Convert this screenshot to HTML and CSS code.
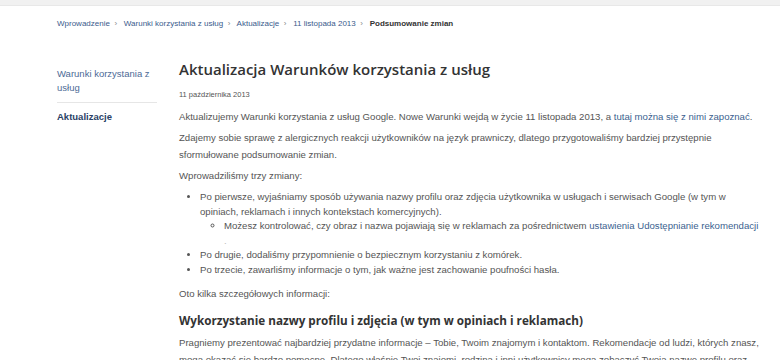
FILE: index.html
```html
<!DOCTYPE html>
<html lang="pl">
<head>
    <meta charset="UTF-8">
    <title>Podsumowanie zmian</title>
    <link rel="stylesheet" href="styles.css">
</head>
<body>
    <div class="topbar"></div>
    <div class="breadcrumbs">
        <a href="#">Wprowadzenie</a><span class="sep">›</span>
        <a href="#">Warunki korzystania z usług</a><span class="sep">›</span>
        <a href="#">Aktualizacje</a><span class="sep">›</span>
        <a href="#">11 listopada 2013</a><span class="sep">›</span>
        <b>Podsumowanie zmian</b>
    </div>
    <div class="page">
        <div class="sidebar">
            <a href="#" class="side-link">Warunki korzystania z usług</a>
            <a href="#" class="side-link current">Aktualizacje</a>
        </div>
        <div class="content">
            <h1>Aktualizacja Warunków korzystania z usług</h1>
            <div class="date">11 października 2013</div>
            <p>Aktualizujemy Warunki korzystania z usług Google. Nowe Warunki wejdą w życie 11 listopada 2013, a <a href="#">tutaj można się z nimi zapoznać</a>.</p>
            <p>Zdajemy sobie sprawę z alergicznych reakcji użytkowników na język prawniczy, dlatego przygotowaliśmy bardziej przystępnie sformułowane podsumowanie zmian.</p>
            <p>Wprowadziliśmy trzy zmiany:</p>
            <ul>
                <li>Po pierwsze, wyjaśniamy sposób używania nazwy profilu oraz zdjęcia użytkownika w usługach i serwisach Google (w tym w opiniach, reklamach i innych kontekstach komercyjnych).
                    <ul>
                        <li>Możesz kontrolować, czy obraz i nazwa pojawiają się w reklamach za pośrednictwem <a href="#">ustawienia Udostępnianie rekomendacji</a><br><span class="stray">.</span></li>
                    </ul>
                </li>
                <li>Po drugie, dodaliśmy przypomnienie o bezpiecznym korzystaniu z komórek.</li>
                <li>Po trzecie, zawarliśmy informacje o tym, jak ważne jest zachowanie poufności hasła.</li>
            </ul>
            <p>Oto kilka szczegółowych informacji:</p>
            <h2>Wykorzystanie nazwy profilu i zdjęcia (w tym w opiniach i reklamach)</h2>
            <p>Pragniemy prezentować najbardziej przydatne informacje – Tobie, Twoim znajomym i kontaktom. Rekomendacje od ludzi, których znasz, mogą okazać się bardzo pomocne. Dlatego właśnie Twoi znajomi, rodzina i inni użytkownicy mogą zobaczyć Twoją nazwę profilu oraz zdjęcie.</p>
        </div>
    </div>
</body>
</html>
```

FILE: styles.css
```css
body {
    margin: 0;
    font-family: "Liberation Sans", Arial, sans-serif;
    color: #555;
    background: #fff;
}
a {
    color: #3b5f8f;
    text-decoration: none;
}
.topbar {
    height: 5px;
    background: #f1f1f1;
    border-bottom: 1px solid #e8e8e8;
}
.breadcrumbs {
    padding: 12px 0 0 57px;
    font-size: 8px;
    line-height: 12px;
}
.breadcrumbs a {
    color: #3b5b8c;
}
.breadcrumbs b {
    color: #333;
}
.sep {
    color: #888;
    margin: 0 4.5px;
}
.page {
    display: flex;
    padding: 24px 0 0 57px;
}
.sidebar {
    width: 100px;
    flex: none;
    margin-right: 22px;
    padding-top: 13px;
}
.side-link {
    display: block;
    font-size: 9.5px;
    line-height: 14px;
    color: #4d6a96;
    padding-bottom: 7px;
}
.side-link.current {
    color: #2a3f66;
    font-weight: bold;
    border-top: 1px solid #e6e6e6;
    padding-top: 7px;
}
.content {
    width: 585px;
    font-size: 9.6px;
    line-height: 17px;
}
h1 {
    font-family: "Open Sans", sans-serif;
    font-size: 15px;
    font-weight: 600;
    color: #333;
    margin: 3px 0 8px;
    line-height: 24px;
}
.date {
    font-size: 7.5px;
    line-height: 12px;
    margin-bottom: 7px;
}
p {
    margin: 0 0 4px;
}
ul {
    margin: 6px 0 8px;
    padding-left: 21px;
    list-style: disc;
}
ul ul {
    margin: 0;
    padding-left: 24px;
    list-style: circle;
}
li {
    line-height: 14.5px;
}
.stray {
    color: #bbb;
}
h2 {
    font-family: "Open Sans", sans-serif;
    font-size: 11.7px;
    font-weight: 700;
    color: #333;
    margin: 8px 0 4px;
    line-height: 20px;
}
```
